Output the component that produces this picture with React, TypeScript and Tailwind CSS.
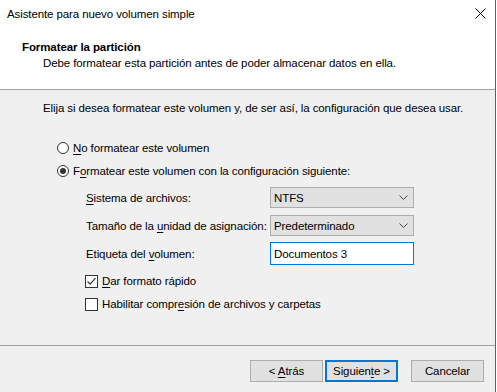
import React from 'react'

const U = ({ children }: { children: React.ReactNode }) => (
  <span className="underline underline-offset-2">{children}</span>
)

const Radio = ({ checked }: { checked?: boolean }) => (
  <span className="w-[12px] h-[12px] rounded-full border border-[#333] bg-white flex items-center justify-center shrink-0">
    {checked && <span className="w-[6px] h-[6px] rounded-full bg-[#333]" />}
  </span>
)

const Check = ({ checked }: { checked?: boolean }) => (
  <span className="w-[13px] h-[13px] border border-[#333] bg-white flex items-center justify-center shrink-0">
    {checked && (
      <svg width="11" height="11" viewBox="0 0 11 11">
        <path d="M1.5 5.5 L4.2 8.2 L9.5 2.2" fill="none" stroke="#333" strokeWidth="1.2" />
      </svg>
    )}
  </span>
)

const Combo = ({ value }: { value: string }) => (
  <div className="w-[144px] h-[21px] border border-[#adadad] bg-[#e1e1e1] flex items-center justify-between pl-[3px] pr-[5px]">
    <span>{value}</span>
    <svg width="9" height="6" viewBox="0 0 9 6">
      <path d="M0.5 0.5 L4.5 4.5 L8.5 0.5" fill="none" stroke="#444" strokeWidth="1" />
    </svg>
  </div>
)

const Btn = ({ children, primary }: { children: React.ReactNode; primary?: boolean }) => (
  <button
    className={
      primary
        ? 'w-[73px] h-[22px] border-2 border-[#0078d7] bg-[#e1e1e1] flex items-center justify-center'
        : 'w-[73px] h-[22px] border border-[#adadad] bg-[#e1e1e1] flex items-center justify-center'
    }
  >
    <span>{children}</span>
  </button>
)

export default function App() {
  return (
    <div
      className="w-[496px] h-[392px] border-r border-[#0078d7] bg-[#f0f0f0] flex flex-col text-[11.5px] tracking-[-0.1px] leading-[16px] text-black whitespace-nowrap"
      style={{ fontFamily: '"Liberation Sans", Arial, sans-serif' }}
    >
      {/* title bar */}
      <div className="h-[27px] bg-white flex items-center justify-between pl-[7px] pr-[9px]">
        <span>Asistente para nuevo volumen simple</span>
        <svg width="11" height="11" viewBox="0 0 11 11">
          <path d="M0.5 0.5 L10.5 10.5 M10.5 0.5 L0.5 10.5" stroke="#000" strokeWidth="1" />
        </svg>
      </div>

      {/* header */}
      <div className="h-[63px] bg-white border-b border-[#a0a0a0] pt-[12px] pl-[22px]">
        <div className="font-bold">Formatear la partición</div>
        <div className="pl-[21px]">Debe formatear esta partición antes de poder almacenar datos en ella.</div>
      </div>

      {/* body */}
      <div className="flex-1 pl-[43px] pt-[10px]">
        <p>Elija si desea formatear este volumen y, de ser así, la configuración que desea usar.</p>

        <div className="mt-[24px] ml-[14px] flex items-center gap-[4px] h-[16px]">
          <Radio />
          <span>
            <U>N</U>o formatear este volumen
          </span>
        </div>
        <div className="mt-[7px] ml-[14px] flex items-center gap-[4px] h-[16px]">
          <Radio checked />
          <span>
            F<U>o</U>rmatear este volumen con la configuración siguiente:
          </span>
        </div>

        <div className="ml-[43px] mt-[8px] grid grid-cols-[184px_144px] grid-rows-[21px_21px_23px] gap-y-[7px] items-center">
          <span>
            <U>S</U>istema de archivos:
          </span>
          <Combo value="NTFS" />
          <span>
            Tamaño de la <U>u</U>nidad de asignación:
          </span>
          <Combo value="Predeterminado" />
          <span className="-mt-[2px]">
            Etiqueta del <U>v</U>olumen:
          </span>
          <div className="-mt-[2px] w-[144px] h-[23px] border border-[#0078d7] bg-white flex items-center pl-[3px]">
            Documentos 3
          </div>
        </div>

        <div className="ml-[42px] mt-[7px] flex items-center gap-[4px] h-[16px]">
          <Check checked />
          <span>
            <U>D</U>ar formato rápido
          </span>
        </div>
        <div className="ml-[42px] mt-[7px] flex items-center gap-[4px] h-[16px]">
          <Check />
          <span>
            Habilitar compr<U>e</U>sión de archivos y carpetas
          </span>
        </div>
      </div>

      {/* footer */}
      <div className="h-[47px] border-t border-[#a0a0a0] flex items-start justify-end pt-[14px] pr-[11px]">
        <div className="flex">
          <Btn>
            &lt; <U>A</U>trás
          </Btn>
          <div className="ml-[2px]">
            <Btn primary>
              Siguien<U>t</U>e &gt;
            </Btn>
          </div>
          <div className="ml-[13px]">
            <Btn>Cancelar</Btn>
          </div>
        </div>
      </div>
    </div>
  )
}
